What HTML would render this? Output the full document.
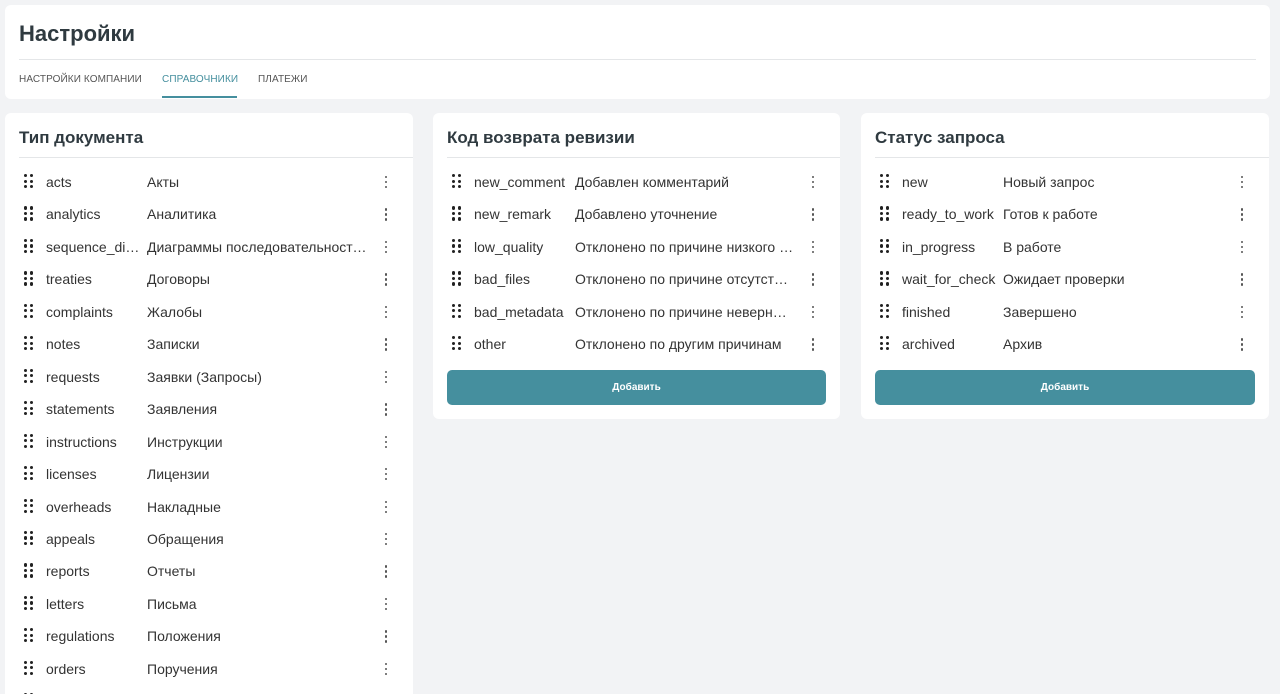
<!DOCTYPE html>
<html><head><meta charset="utf-8"><style>
*{box-sizing:border-box;margin:0;padding:0}
html,body{width:1280px;height:694px;overflow:hidden}
body{background:#f2f3f5;font-family:"Liberation Sans",sans-serif;color:#333;position:relative}
.hdr{position:absolute;left:5px;top:5px;width:1265px;height:94px;background:#fff;border-radius:6px}
.hdr h1{position:absolute;left:14px;top:16px;font-size:22px;font-weight:bold;color:#2f3a40}
.hdr .ln{position:absolute;left:14px;right:14px;top:54px;border-top:1px solid #e4e6e8}
.tab{position:absolute;top:69px;font-size:10px;color:#555;letter-spacing:.1px}
.tab.a{color:#458f9e}
.ul{position:absolute;left:157px;top:91px;width:75px;height:2px;background:#458f9e}
.card{position:absolute;top:113px;background:#fff;border-radius:6px}
.card h2{position:absolute;left:14px;top:15px;font-size:17px;font-weight:bold;color:#2f3a40}
.card .ln{position:absolute;left:14px;right:0;top:44px;border-top:1px solid #e4e6e8}
.row{position:absolute;left:0;right:0;height:32px;font-size:14px;line-height:32px}
.row .k{position:absolute;left:41px;width:96px;white-space:nowrap;overflow:hidden;text-overflow:ellipsis}
.row .v{position:absolute;left:142px;width:220px;white-space:nowrap;overflow:hidden;text-overflow:ellipsis}
.dr{position:absolute;left:19px;top:8px;width:10px;height:14px}
.dr i{position:absolute;width:3.2px;height:3.2px;border-radius:50%;background:#222}
.kb{position:absolute;right:25px;top:10px;width:3px;height:13px}
.kb i{position:absolute;left:0;width:2.4px;height:2.4px;border-radius:50%;background:#555}
.btn{position:absolute;left:14px;right:14px;top:257px;height:35px;background:#458f9e;border-radius:5px;color:#fff;font-size:10px;font-weight:bold;text-align:center;line-height:35px}
</style></head><body>
<div class="hdr"><h1>Настройки</h1><div class="ln"></div>
<div class="tab" style="left:14px">НАСТРОЙКИ КОМПАНИИ</div>
<div class="tab a" style="left:157px">СПРАВОЧНИКИ</div>
<div class="tab" style="left:253px">ПЛАТЕЖИ</div>
<div class="ul"></div></div>

<div class="card" style="left:5px;width:408px;height:590px"><h2>Тип документа</h2><div class="ln"></div><div id="c1"></div></div>
<div class="card" style="left:433px;width:407px;height:306px"><h2>Код возврата ревизии</h2><div class="ln"></div><div id="c2"></div><div class="btn">Добавить</div></div>
<div class="card" style="left:861px;width:408px;height:306px"><h2>Статус запроса</h2><div class="ln"></div><div id="c3"></div><div class="btn">Добавить</div></div>
<script>
function fill(id,rows){var h='';rows.forEach(function(r,i){h+='<div class="row" style="top:'+(53+i*32.45)+'px"><div class="dr"><i style="left:0;top:0"></i><i style="left:6px;top:0"></i><i style="left:0;top:5.5px"></i><i style="left:6px;top:5.5px"></i><i style="left:0;top:11px"></i><i style="left:6px;top:11px"></i></div><span class="k">'+r[0]+'</span><span class="v">'+r[1]+'</span>'+(r[0]?'<div class="kb"><i style="top:0"></i><i style="top:5px"></i><i style="top:10px"></i></div>':'')+'</div>'});document.getElementById(id).innerHTML=h}
fill('c1',[['acts','Акты'],['analytics','Аналитика'],['sequence_diagrams','Диаграммы последовательностей'],['treaties','Договоры'],['complaints','Жалобы'],['notes','Записки'],['requests','Заявки (Запросы)'],['statements','Заявления'],['instructions','Инструкции'],['licenses','Лицензии'],['overheads','Накладные'],['appeals','Обращения'],['reports','Отчеты'],['letters','Письма'],['regulations','Положения'],['orders','Поручения'],['','']]);
fill('c2',[['new_comment','Добавлен комментарий'],['new_remark','Добавлено уточнение'],['low_quality','Отклонено по причине низкого качества'],['bad_files','Отклонено по причине отсутствия файлов'],['bad_metadata','Отклонено по причине неверных данных'],['other','Отклонено по другим причинам']]);
fill('c3',[['new','Новый запрос'],['ready_to_work','Готов к работе'],['in_progress','В работе'],['wait_for_check','Ожидает проверки'],['finished','Завершено'],['archived','Архив']]);
</script>
</body></html>
